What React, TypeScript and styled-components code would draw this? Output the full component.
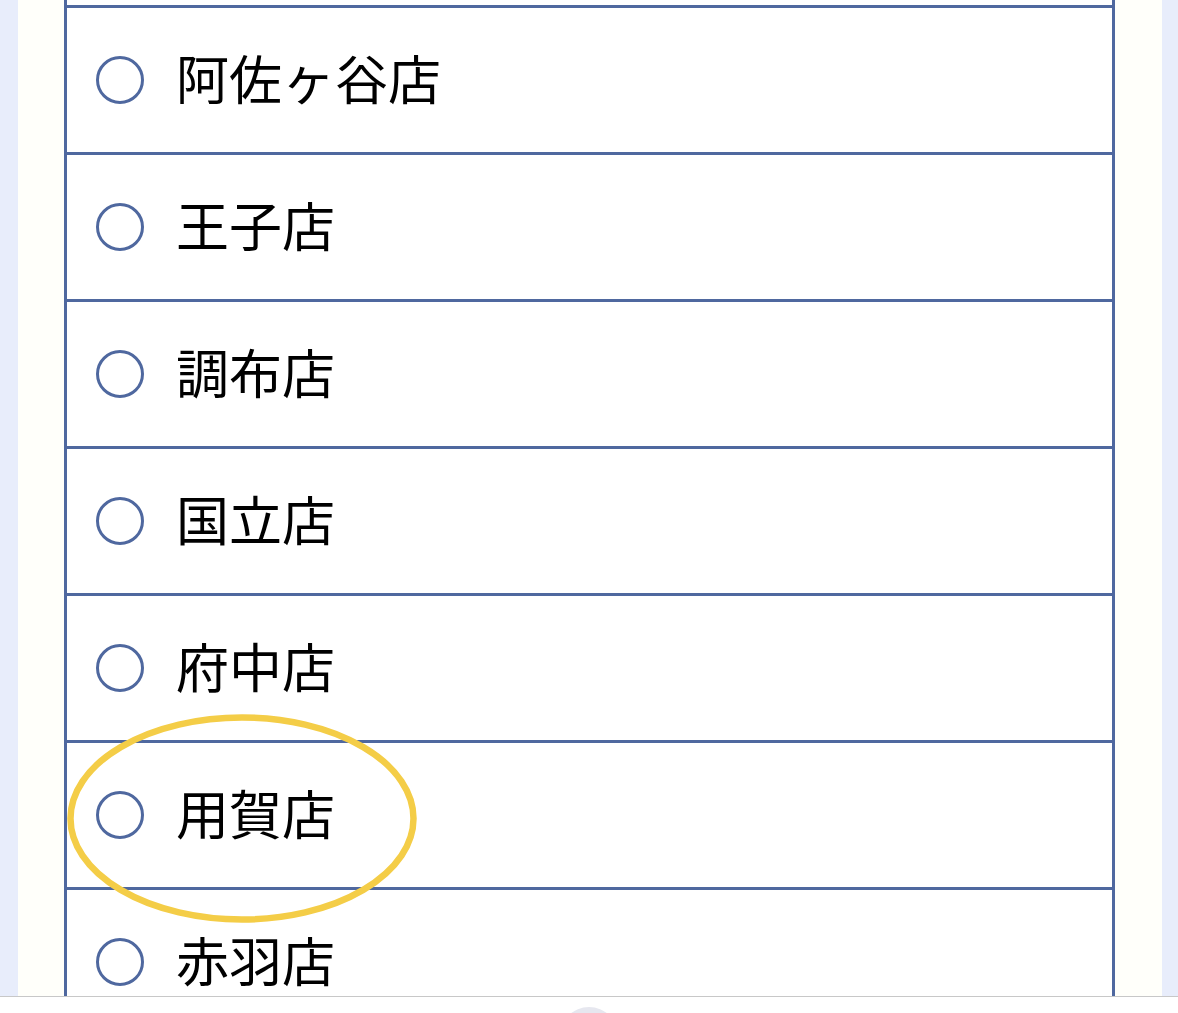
import React from 'react'
import styled, { createGlobalStyle } from 'styled-components'

const LINE = '#4f689f'

const GlobalStyle = createGlobalStyle`
    html, body {
        margin: 0;
        padding: 0;
    }
    body {
        font-family: "Noto Sans CJK JP", "Noto Sans", sans-serif;
        background: #e8edfb;
    }
`

const Screen = styled.div`
    height: 100vh;
    display: flex;
    flex-direction: column;
    overflow: hidden;
`

const Viewport = styled.div`
    flex: 1;
    min-height: 0;
    overflow: hidden;
    padding: 0 16px 0 18px;
    background: #e8edfb;
`

const Panel = styled.div`
    height: 100%;
    display: flow-root;
    background: #fffffa;
    padding: 0 47px 0 46px;
`

const StoreList = styled.ul`
    list-style: none;
    margin: -142px 0 0 0;
    padding: 0;
    background: #ffffff;
    border-left: 3px solid ${LINE};
    border-right: 3px solid ${LINE};
`

const StoreRow = styled.li<{ $marked?: boolean }>`
    position: relative;
    box-sizing: border-box;
    height: 147px;
    border-top: 3px solid ${LINE};
    display: flex;
    align-items: center;
    padding-left: 29px;
    gap: 32px;
    z-index: ${(p) => (p.$marked ? 2 : 1)};
`

const Radio = styled.span`
    box-sizing: border-box;
    flex: none;
    width: 48px;
    height: 48px;
    border-radius: 50%;
    border: 3px solid ${LINE};
    background: #ffffff;
`

const StoreName = styled.span`
    font-size: 53px;
    line-height: 1;
    color: #000000;
    margin-top: -6px;
`

const Highlight = styled.svg`
    position: absolute;
    left: 0;
    top: -29px;
    width: 350px;
    height: 209px;
    overflow: visible;
    pointer-events: none;
`

const Footer = styled.div`
    flex: none;
    height: 17px;
    box-sizing: border-box;
    border-top: 1px solid #c8c8c8;
    background: #ffffff;
    overflow: hidden;
`

const HomeDot = styled.div`
    width: 58px;
    height: 58px;
    margin: 10px auto 0;
    border-radius: 50%;
    background: #e6e7ef;
`

const stores = [
    '吉祥寺店',
    '阿佐ヶ谷店',
    '王子店',
    '調布店',
    '国立店',
    '府中店',
    '用賀店',
    '赤羽店',
    '町田店',
]

const App = () => {
    return (
        <>
            <GlobalStyle />
            <Screen>
                <Viewport>
                    <Panel>
                        <StoreList>
                            {stores.map((name) => {
                                const marked = name === '用賀店'
                                return (
                                    <StoreRow key={name} $marked={marked}>
                                        <Radio />
                                        <StoreName>{name}</StoreName>
                                        {marked && (
                                            <Highlight viewBox="0 0 350 209">
                                                <ellipse
                                                    cx="175"
                                                    cy="104.5"
                                                    rx="171.5"
                                                    ry="101"
                                                    fill="none"
                                                    stroke="#f4cd47"
                                                    strokeWidth="6.5"
                                                />
                                            </Highlight>
                                        )}
                                    </StoreRow>
                                )
                            })}
                        </StoreList>
                    </Panel>
                </Viewport>
                <Footer>
                    <HomeDot />
                </Footer>
            </Screen>
        </>
    )
}

export default App
